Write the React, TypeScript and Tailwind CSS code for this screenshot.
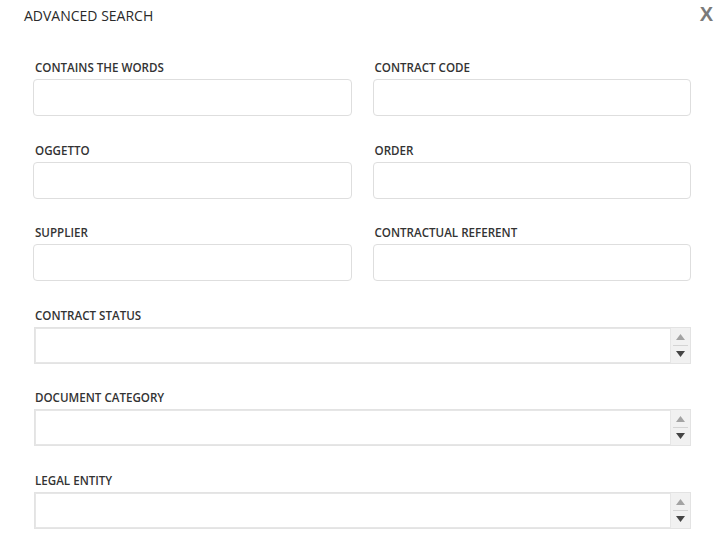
import React from "react";

const TEXT_FIELDS: [string, string][] = [
  ["CONTAINS THE WORDS", "CONTRACT CODE"],
  ["OGGETTO", "ORDER"],
  ["SUPPLIER", "CONTRACTUAL REFERENT"],
];

const LIST_FIELDS = ["CONTRACT STATUS", "DOCUMENT CATEGORY", "LEGAL ENTITY"];

function Label({ children }: { children: React.ReactNode }) {
  return (
    <label className="block pl-[2px] pt-[1px] text-[11.6px] leading-4 font-semibold text-[#333] mb-[3px]">
      {children}
    </label>
  );
}

function TextField({ label }: { label: string }) {
  return (
    <div>
      <Label>{label}</Label>
      <input
        type="text"
        className="block w-full h-[37px] rounded-[4px] border border-[#dedede] bg-white px-2 text-[13px] outline-none"
      />
    </div>
  );
}

function ListField({ label }: { label: string }) {
  return (
    <div>
      <Label>{label}</Label>
      <div className="flex h-[37px] border border-[#e3e3e3] bg-[#f1f1f1] ml-[1px]">
        <div className="flex-1 bg-white border border-[#e6e6e6]" />
        <div className="w-[19px] flex flex-col items-center justify-center">
          <svg width="9" height="6" viewBox="0 0 9 6" className="mb-[5px]">
            <path d="M0 6 L4.5 0 L9 6 Z" fill="#a3a3a3" />
          </svg>
          <div className="w-[15px] h-px bg-[#d4d4d4] mb-[5px]" />
          <svg width="9" height="6" viewBox="0 0 9 6">
            <path d="M0 0 L9 0 L4.5 6 Z" fill="#444" />
          </svg>
        </div>
      </div>
    </div>
  );
}

export default function App() {
  return (
    <div className="relative w-[726px] h-[551px] bg-white overflow-hidden" style={{ fontFamily: '"Open Sans", sans-serif' }}>
      <button
        className="absolute top-[2px] right-[13px] text-[20px] leading-6 font-bold text-[#7a7a7a]"
        style={{ fontFamily: '"Liberation Sans", sans-serif' }}
      >
        X
      </button>

      <h2 className="pl-6 pt-[6px] text-[14px] leading-5 font-normal text-[#2a2a2a]">ADVANCED SEARCH</h2>

      <div className="pl-[33px] pr-[35px] pt-[33px] flex flex-col gap-[25.5px]">
        {TEXT_FIELDS.map(([a, b]) => (
          <div key={a} className="grid grid-cols-2 gap-x-[21px]">
            <TextField label={a} />
            <TextField label={b} />
          </div>
        ))}
        {LIST_FIELDS.map((l) => (
          <ListField key={l} label={l} />
        ))}
      </div>
    </div>
  );
}
